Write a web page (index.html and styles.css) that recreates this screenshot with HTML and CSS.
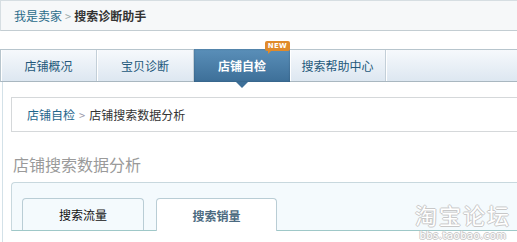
FILE: index.html
```html
<!DOCTYPE html>
<html lang="zh-CN">
<head>
<meta charset="utf-8">
<title>搜索诊断助手</title>
<link rel="stylesheet" href="styles.css">
</head>
<body>
<div class="topbar">
  <a class="crumb-link" href="#">我是卖家</a><span class="sep">&gt;</span><strong class="crumb-cur">搜索诊断助手</strong>
</div>

<nav class="tabs">
  <a class="tab" href="#">店铺概况</a>
  <a class="tab" href="#">宝贝诊断</a>
  <a class="tab active" href="#">店铺自检<span class="badge">NEW</span><span class="pointer"></span></a>
  <a class="tab" href="#">搜索帮助中心</a>
  <div class="tab-fill"></div>
</nav>

<div class="panel">
  <div class="breadcrumb">
    <a class="bc-link" href="#">店铺自检</a><span class="bc-sep">&gt;</span><span class="bc-cur">店铺搜索数据分析</span>
  </div>
  <h2 class="title">店铺搜索数据分析</h2>
  <div class="subtabs">
    <a class="subtab" href="#">搜索流量</a>
    <a class="subtab current" href="#">搜索销量</a>
  </div>
</div>

<div class="watermark">
  <div class="wm-big">淘宝论坛</div>
  <div class="wm-small">bbs.taobao.com</div>
</div>
</body>
</html>
```

FILE: styles.css
```css
* { box-sizing: border-box; }
html, body { margin: 0; padding: 0; }
body {
  font-family: "Noto Sans CJK SC", "Noto Sans", sans-serif;
  font-size: 12px;
  color: #333;
  background: #fff;
  overflow: hidden;
  width: 517px;
  height: 242px;
  position: relative;
}
a { text-decoration: none; }

.topbar {
  height: 31px;
  border: 1px solid #d6dee2;
  border-bottom-color: #c3cdd2;
  border-right: none;
  background: #f6f8f9;
  padding-left: 13px;
  display: flex;
  align-items: center;
}
.crumb-link { color: #2a6c8a; }
.sep { color: #9aa; margin: 0 3px; font-size: 11px; }
.crumb-cur { color: #333; font-weight: bold; }

.tabs {
  margin-top: 18px;
  height: 33px;
  display: flex;
  border-top: 1px solid #b7c5cd;
  border-bottom: 1px solid #a9b7c0;
  background: linear-gradient(#f6f9fc, #dde7f1);
  border-left: 1px solid #b7c5cd;
}
.tab {
  width: 96px;
  flex: none;
  display: flex;
  align-items: center;
  justify-content: center;
  color: #23587a;
  font-size: 12px;
  border-right: 1px solid #c3cfd8;
  box-shadow: inset 1px 0 0 #fff;
  position: relative;
}
.tab:nth-child(2) { width: 97px; }
.tab.active {
  margin-top: -1px;
  margin-bottom: -1px;
  background: linear-gradient(#5a8fb9, #3d6f98);
  color: #fff;
  font-weight: bold;
  border-right: none;
  box-shadow: inset 0 0 2px rgba(0,0,0,0.25);
}
.tab-fill { flex: 1; box-shadow: inset 1px 0 0 #fff; }

.badge {
  position: absolute;
  right: 0;
  top: -8px;
  background: #e08a2a;
  color: #fff;
  font-family: "DejaVu Sans", sans-serif;
  font-size: 7px;
  font-weight: bold;
  line-height: 10px;
  padding: 0 3px;
  border-radius: 2px;
  letter-spacing: 0.3px;
}
.badge::after {
  content: "";
  position: absolute;
  left: 3px;
  bottom: -3px;
  border-left: 3px solid #e08a2a;
  border-bottom: 3px solid transparent;
}
.pointer {
  position: absolute;
  left: 50%;
  bottom: -6px;
  margin-left: -6px;
  border-left: 6px solid transparent;
  border-right: 6px solid transparent;
  border-top: 6px solid #3d6f98;
}

.panel {
  margin-left: 2px;
  border-left: 1px solid #d3e1e8;
  padding-left: 8px;
  padding-top: 15px;
  height: 161px;
}
.breadcrumb {
  height: 35px;
  border: 1px solid #d5d8da;
  border-right: none;
  padding-left: 15px;
  display: flex;
  align-items: center;
}
.bc-link { color: #1f668c; }
.bc-sep { color: #99a; margin: 0 4px; font-size: 11px; }
.bc-cur { color: #333; }

.title {
  margin: 22px 0 0 2px;
  font-size: 16px;
  line-height: 20px;
  font-weight: normal;
  color: #9a9a9a;
}

.subtabs {
  margin-top: 8px;
  height: 49px;
  border: 1px solid #c8d8de;
  border-right: none;
  border-bottom: 1px solid #9fc8c8;
  border-radius: 4px 0 0 0;
  background: #f4fafd;
  padding: 16px 0 0 10px;
  display: flex;
  align-items: flex-end;
  gap: 12px;
}
.subtab {
  width: 122px;
  height: 32px;
  border: 1px solid #b9cdd5;
  border-bottom: none;
  border-radius: 4px 4px 0 0;
  display: flex;
  align-items: center;
  justify-content: center;
  color: #111;
  font-size: 12px;
  background: #f4fafd;
}
.subtab.current {
  width: 121px;
  height: 33px;
  margin-bottom: -1px;
  background: #fff;
  color: #4b6a80;
  font-weight: bold;
}

.watermark {
  position: absolute;
  right: 6px;
  bottom: 0;
  text-align: center;
  color: #fff;
  pointer-events: none;
}
.wm-big {
  font-size: 22px;
  line-height: 32px;
  letter-spacing: 2px;
  text-shadow: 1px 0 0 #c8c8c8, -1px 0 0 #c8c8c8, 0 1px 0 #c8c8c8, 0 -1px 0 #c8c8c8;
}
.wm-small {
  font-family: "DejaVu Sans", sans-serif;
  font-size: 10px;
  line-height: 12px;
  letter-spacing: 0.5px;
  text-shadow: 1px 0 0 #c8c8c8, -1px 0 0 #c8c8c8, 0 1px 0 #c8c8c8, 0 -1px 0 #c8c8c8;
}
```
